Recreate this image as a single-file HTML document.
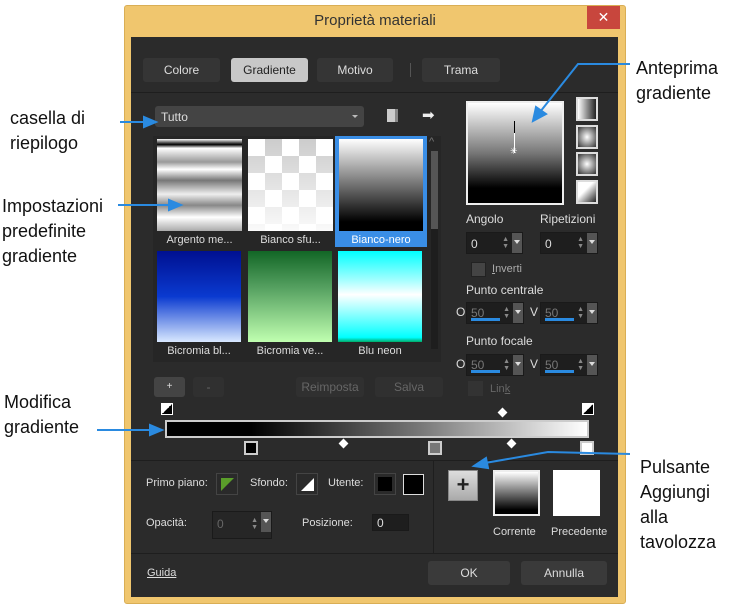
<!DOCTYPE html>
<html><head><meta charset="utf-8"><style>
*{margin:0;padding:0;box-sizing:border-box}
body{width:738px;height:610px;background:#fff;position:relative;overflow:hidden;font-family:"Liberation Sans",sans-serif}
.a{position:absolute}
.ann{position:absolute;font-size:18px;line-height:25px;color:#111}
.t{position:absolute;font-size:11px;color:#ddd;white-space:nowrap}
.btn{position:absolute;background:#3a3a3a;border-radius:3px;color:#ddd;font-size:12px;text-align:center}
.inp{position:absolute;background:#1e1e1e;border:1px solid #1a1a1a}
.sp{position:absolute;right:0;top:0;width:10px;height:100%;background:#555}
.sp:after{content:"";position:absolute;left:2px;top:7px;border-left:3px solid transparent;border-right:3px solid transparent;border-top:4px solid #ddd}
.ud{position:absolute;right:13px;top:3px;font-size:7px;color:#888;line-height:7px}
.bl{position:absolute;left:4px;bottom:2px;width:29px;height:3px;background:#2a8ae0}
.sw{position:absolute;width:22px;height:22px;border:1px solid #444;background:#2a2a2a}
.sb{position:absolute;width:22px;height:24px;border:2px solid #ddd;background:#333}
</style></head><body>
<!-- dialog -->
<div class="a" style="left:124px;top:5px;width:502px;height:599px;background:#f0c66e;border:1px solid #d9ae55;border-radius:3px"></div>
<div class="a" style="left:124px;top:12px;width:502px;text-align:center;font-size:15px;color:#333">Proprietà materiali</div>
<div class="a" style="left:587px;top:6px;width:33px;height:23px;background:#c8463d;color:#fff;text-align:center;font-size:14px;line-height:22px">✕</div>
<div class="a" style="left:131px;top:37px;width:487px;height:560px;background:#2b2b2b"></div>
<!-- tabs -->
<div class="btn" style="left:143px;top:58px;width:77px;height:24px;line-height:24px;background:#353535">Colore</div>
<div class="btn" style="left:231px;top:58px;width:77px;height:24px;line-height:24px;background:#c8c8c8;color:#222">Gradiente</div>
<div class="btn" style="left:317px;top:58px;width:76px;height:24px;line-height:24px;background:#353535">Motivo</div>
<div class="a" style="left:410px;top:63px;width:1px;height:14px;background:#555"></div>
<div class="btn" style="left:422px;top:58px;width:78px;height:24px;line-height:24px;background:#353535">Trama</div>
<div class="a" style="left:131px;top:92px;width:487px;height:1px;background:#1e1e1e"></div>
<!-- dropdown -->
<div class="a" style="left:155px;top:106px;width:209px;height:21px;background:#444;border-radius:3px"></div>
<div class="t" style="left:161px;top:110px;font-size:12px">Tutto</div>
<div class="a" style="left:352px;top:115px;border-left:3px solid transparent;border-right:3px solid transparent;border-top:3px solid #bbb"></div>
<div class="a" style="left:387px;top:109px;width:11px;height:13px;background:#ccc;border-right:3px solid #888"></div>
<div class="t" style="left:422px;top:106px;font-size:15px;color:#eee">➡</div>
<!-- thumbs -->
<div class="a" style="left:153px;top:136px;width:288px;height:226px;background:#262626"></div>
<div class="a" style="left:157px;top:139px;width:85px;height:92px;background:linear-gradient(#fff,#000 6%,#fff 10%,#999 25%,#fff 33%,#777 45%,#eee 60%,#888 72%,#fff 85%,#aaa 100%)"></div>
<div class="a" style="left:248px;top:139px;width:85px;height:92px;background:linear-gradient(rgba(255,255,255,0),rgba(255,255,255,.9)),repeating-conic-gradient(#ccc 0 25%,#fff 0 50%) 0 0/34px 34px"></div>
<div class="a" style="left:335px;top:136px;width:92px;height:111px;background:#3a8ee6"></div>
<div class="a" style="left:339px;top:139px;width:84px;height:92px;background:linear-gradient(#fff,#000 90%)"></div>
<div class="t" style="left:157px;top:234px;width:85px;text-align:center">Argento me...</div>
<div class="t" style="left:248px;top:234px;width:85px;text-align:center">Bianco sfu...</div>
<div class="t" style="left:335px;top:234px;width:92px;text-align:center;color:#fff">Bianco-nero</div>
<div class="a" style="left:157px;top:251px;width:84px;height:91px;background:linear-gradient(#001090,#0a3ad0 50%,#d8e8ff)"></div>
<div class="a" style="left:248px;top:251px;width:84px;height:91px;background:linear-gradient(#126626,#55a060 40%,#c0ffb0)"></div>
<div class="a" style="left:338px;top:251px;width:84px;height:91px;background:linear-gradient(#0ff,#9ff 30%,#fff 48%,#8ff 70%,#0ff 95%,#0a6)"></div>
<div class="t" style="left:157px;top:345px;width:84px;text-align:center">Bicromia bl...</div>
<div class="t" style="left:248px;top:345px;width:84px;text-align:center">Bicromia ve...</div>
<div class="t" style="left:338px;top:345px;width:84px;text-align:center">Blu neon</div>
<div class="a" style="left:431px;top:151px;width:7px;height:198px;background:#1e1e1e"></div>
<div class="a" style="left:431px;top:151px;width:7px;height:78px;background:#555"></div>
<div class="t" style="left:429px;top:136px;color:#777">^</div>
<!-- preview -->
<div class="a" style="left:466px;top:101px;width:98px;height:104px;border:2px solid #eee;background:linear-gradient(#fff,#777 50%,#000 85%)"></div>
<div class="a" style="left:514px;top:121px;width:1px;height:12px;background:#000"></div>
<div class="a" style="left:514px;top:133px;width:1px;height:20px;background:#fff"></div>
<div class="t" style="left:510px;top:146px;color:#fff;font-size:9px">✳</div>
<div class="sb" style="left:576px;top:97px;background:linear-gradient(90deg,#fff,#222)"></div>
<div class="sb" style="left:576px;top:125px;background:radial-gradient(#fff,#333)"></div>
<div class="sb" style="left:576px;top:152px;background:radial-gradient(circle,#fff,#444 90%)"></div>
<div class="sb" style="left:576px;top:180px;background:linear-gradient(135deg,#fff 40%,#222)"></div>
<div class="t" style="left:466px;top:212px;font-size:12px">Angolo</div>
<div class="t" style="left:540px;top:212px;font-size:12px">Ripetizioni</div>
<div class="inp" style="left:466px;top:232px;width:57px;height:22px"><span class="t" style="left:4px;top:4px;font-size:12px">0</span><span class="ud">▲<br>▼</span><span class="sp"></span></div>
<div class="inp" style="left:540px;top:232px;width:58px;height:22px"><span class="t" style="left:4px;top:4px;font-size:12px">0</span><span class="ud">▲<br>▼</span><span class="sp"></span></div>
<div class="a" style="left:471px;top:262px;width:15px;height:15px;background:#444;border:1px solid #222"></div>
<div class="t" style="left:492px;top:263px;color:#aaa"><u>I</u>nverti</div>
<div class="t" style="left:466px;top:283px;font-size:12px">Punto centrale</div>
<div class="t" style="left:456px;top:305px;font-size:12px">O</div>
<div class="t" style="left:530px;top:305px;font-size:12px">V</div>
<div class="inp" style="left:466px;top:302px;width:58px;height:22px"><span class="t" style="left:4px;top:3px;font-size:12px;color:#777">50</span><span class="ud">▲<br>▼</span><span class="sp"></span><span class="bl"></span></div>
<div class="inp" style="left:540px;top:302px;width:58px;height:22px"><span class="t" style="left:4px;top:3px;font-size:12px;color:#777">50</span><span class="ud">▲<br>▼</span><span class="sp"></span><span class="bl"></span></div>
<div class="t" style="left:466px;top:334px;font-size:12px">Punto focale</div>
<div class="t" style="left:456px;top:357px;font-size:12px">O</div>
<div class="t" style="left:530px;top:357px;font-size:12px">V</div>
<div class="inp" style="left:466px;top:354px;width:58px;height:22px"><span class="t" style="left:4px;top:3px;font-size:12px;color:#777">50</span><span class="ud">▲<br>▼</span><span class="sp"></span><span class="bl"></span></div>
<div class="inp" style="left:540px;top:354px;width:58px;height:22px"><span class="t" style="left:4px;top:3px;font-size:12px;color:#777">50</span><span class="ud">▲<br>▼</span><span class="sp"></span><span class="bl"></span></div>
<div class="a" style="left:468px;top:381px;width:15px;height:15px;background:#333"></div>
<div class="t" style="left:490px;top:383px;color:#666">Lin<u>k</u></div>
<!-- buttons -->
<div class="btn" style="left:154px;top:377px;width:31px;height:20px;line-height:20px;background:#444;font-size:10px">+</div>
<div class="btn" style="left:193px;top:377px;width:31px;height:20px;line-height:20px;background:#303030;color:#666">-</div>
<div class="btn" style="left:296px;top:377px;width:68px;height:20px;line-height:20px;background:#303030;color:#666">Reimposta</div>
<div class="btn" style="left:375px;top:377px;width:68px;height:20px;line-height:20px;background:#303030;color:#666">Salva</div>
<!-- gradient bar -->
<div class="a" style="left:165px;top:420px;width:424px;height:18px;border:2px solid #ccc;background:linear-gradient(90deg,#000 20%,#777 60%,#fff)"></div>
<div class="a" style="left:161px;top:403px;width:12px;height:12px;border:1px solid #fff;background:linear-gradient(135deg,#fff 50%,#000 50%)"></div>
<div class="a" style="left:582px;top:403px;width:12px;height:12px;border:1px solid #fff;background:linear-gradient(135deg,#fff 50%,#000 50%)"></div>
<div class="a" style="left:499px;top:409px;width:7px;height:7px;background:#fff;transform:rotate(45deg)"></div>
<div class="a" style="left:340px;top:440px;width:7px;height:7px;background:#fff;transform:rotate(45deg)"></div>
<div class="a" style="left:508px;top:440px;width:7px;height:7px;background:#fff;transform:rotate(45deg)"></div>
<div class="a" style="left:244px;top:441px;width:14px;height:14px;border:2px solid #ccc;background:#000"></div>
<div class="a" style="left:428px;top:441px;width:14px;height:14px;border:2px solid #ccc;background:#777"></div>
<div class="a" style="left:580px;top:441px;width:14px;height:14px;border:2px solid #ccc;background:#fff"></div>
<div class="a" style="left:131px;top:460px;width:487px;height:1px;background:#1e1e1e"></div>
<div class="a" style="left:433px;top:460px;width:1px;height:93px;background:#1e1e1e"></div>
<div class="a" style="left:131px;top:553px;width:487px;height:1px;background:#1e1e1e"></div>
<!-- bottom -->
<div class="t" style="left:146px;top:477px">Primo piano:</div>
<div class="sw" style="left:216px;top:473px"><div class="a" style="left:4px;top:4px;width:0;height:0;border-top:13px solid #5a9e2a;border-left:13px solid transparent;transform:scaleX(-1)"></div></div>
<div class="t" style="left:250px;top:477px">Sfondo:</div>
<div class="sw" style="left:296px;top:473px"><div class="a" style="left:4px;top:4px;width:0;height:0;border-bottom:13px solid #fff;border-left:13px solid transparent"></div></div>
<div class="t" style="left:328px;top:477px">Utente:</div>
<div class="sw" style="left:374px;top:473px"><div class="a" style="left:3px;top:3px;width:14px;height:14px;background:#000"></div></div>
<div class="a" style="left:403px;top:474px;width:21px;height:21px;border:1px solid #ddd;background:#000"></div>
<div class="t" style="left:146px;top:517px">Opacità:</div>
<div class="inp" style="left:212px;top:511px;width:60px;height:28px;background:#262626"><span class="t" style="left:4px;top:5px;font-size:12px;color:#666">0</span><span class="ud" style="top:5px">▲<br>▼</span><span class="sp" style="height:20px"></span></div>
<div class="t" style="left:302px;top:517px">Posizione:</div>
<div class="inp" style="left:372px;top:514px;width:37px;height:17px"><span class="t" style="left:4px;top:1px;font-size:12px">0</span></div>
<div class="a" style="left:448px;top:470px;width:30px;height:31px;background:linear-gradient(#ddd,#aaa);border:1px solid #888;color:#222;font-size:22px;text-align:center;line-height:28px;font-weight:bold">+</div>
<div class="a" style="left:493px;top:470px;width:47px;height:46px;border:2px solid #eee;background:linear-gradient(#fff,#000 90%)"></div>
<div class="a" style="left:553px;top:470px;width:47px;height:46px;background:#fff"></div>
<div class="t" style="left:493px;top:526px">Corrente</div>
<div class="t" style="left:551px;top:526px">Precedente</div>
<div class="t" style="left:147px;top:567px"><u>Guida</u></div>
<div class="btn" style="left:428px;top:561px;width:82px;height:24px;line-height:24px">OK</div>
<div class="btn" style="left:521px;top:561px;width:86px;height:24px;line-height:24px">Annulla</div>
<!-- annotations -->
<div class="ann" style="left:10px;top:106px">casella di<br>riepilogo</div>
<div class="ann" style="left:2px;top:194px">Impostazioni<br>predefinite<br>gradiente</div>
<div class="ann" style="left:4px;top:390px">Modifica<br>gradiente</div>
<div class="ann" style="left:636px;top:56px">Anteprima<br>gradiente</div>
<div class="ann" style="left:640px;top:455px">Pulsante<br>Aggiungi<br>alla<br>tavolozza</div>
<svg class="a" style="left:0;top:0" width="738" height="610">
<g stroke="#2a8ae0" stroke-width="2" fill="#2a8ae0">
<line x1="120" y1="122" x2="145" y2="122"/><polygon points="156,122 144,117 144,127"/>
<line x1="118" y1="205" x2="170" y2="205"/><polygon points="181,205 169,200 169,210"/>
<line x1="97" y1="430" x2="150" y2="430"/><polygon points="162,430 150,425 150,435"/>
<polyline fill="none" points="630,64 578,64 540,112"/><polygon points="533,121 536,107 546,114"/>
<polyline fill="none" points="630,454 548,452 485,463"/><polygon points="474,466 486,458 488,468"/>
</g></svg>
</body></html>
